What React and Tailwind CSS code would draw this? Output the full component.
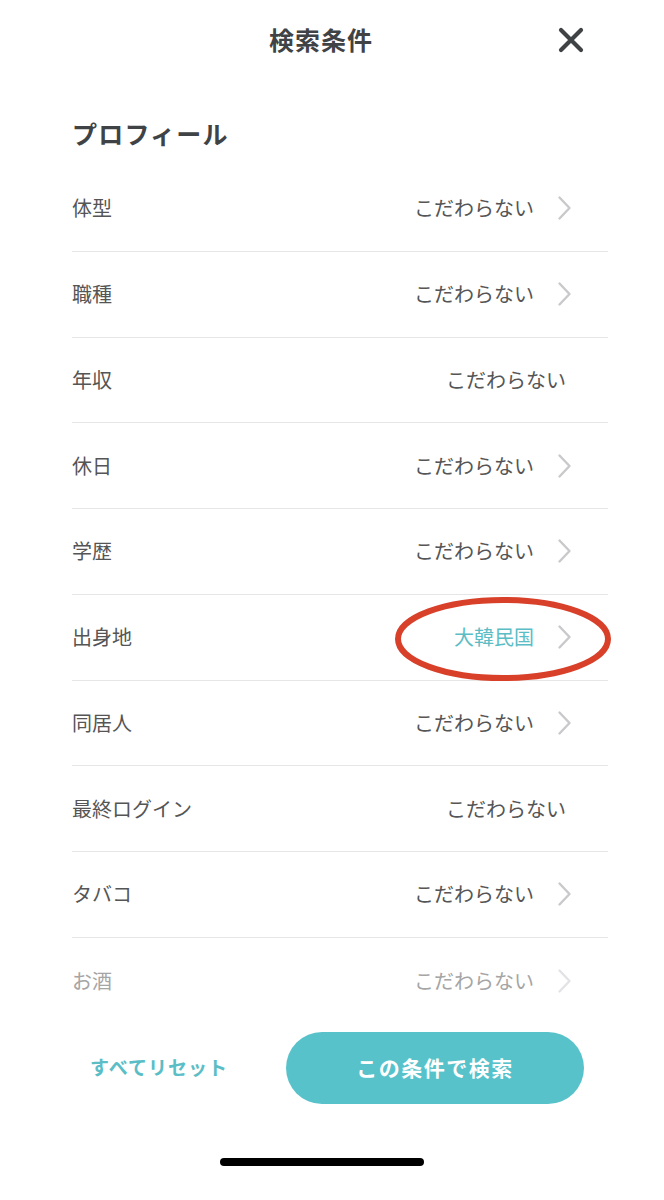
import React from "react";

const rows = [
  { label: "体型", value: "こだわらない", arrow: true },
  { label: "職種", value: "こだわらない", arrow: true },
  { label: "年収", value: "こだわらない", arrow: false },
  { label: "休日", value: "こだわらない", arrow: true },
  { label: "学歴", value: "こだわらない", arrow: true },
  { label: "出身地", value: "大韓民国", arrow: true, active: true },
  { label: "同居人", value: "こだわらない", arrow: true },
  { label: "最終ログイン", value: "こだわらない", arrow: false },
  { label: "タバコ", value: "こだわらない", arrow: true },
  { label: "お酒", value: "こだわらない", arrow: true, faded: true },
];

const Chevron = ({ faded }) => (
  <svg width="15" height="26" viewBox="0 0 15 26" className="ml-[23px]">
    <path
      d="M2.5 2.5 L12.5 13 L2.5 23.5"
      fill="none"
      stroke={faded ? "#e3e3e5" : "#c9c9cc"}
      strokeWidth="2.4"
      strokeLinecap="round"
      strokeLinejoin="round"
    />
  </svg>
);

const Row = ({ row }) => (
  <div
    className={`flex items-center justify-between h-[85.75px] pr-[36px] ${
      row.faded ? "" : "border-b border-[#e6e6e6]"
    }`}
  >
    <span className={`text-[20px] ${row.faded ? "text-[#a5a5a5]" : "text-[#555]"}`}>
      {row.label}
    </span>
    <div className="flex items-center">
      <span
        className={`text-[20px] ${
          row.active ? "text-[#5bbdc5]" : row.faded ? "text-[#a5a5a5]" : "text-[#555]"
        } ${row.arrow ? "" : "mr-[6px]"}`}
      >
        {row.value}
      </span>
      {row.arrow && <Chevron faded={row.faded} />}
    </div>
  </div>
);

export default function App() {
  return (
    <div
      className="relative w-[664px] h-[1200px] bg-white overflow-hidden"
      style={{ fontFamily: '"Noto Sans CJK JP", "Noto Sans", sans-serif' }}
    >
      <header className="relative flex items-center justify-center h-[80px] pr-[22px]">
        <h1 className="text-[25px] font-bold text-[#3f4345] tracking-[1px]">検索条件</h1>
        <button className="absolute right-[79px] top-[26px]">
          <svg width="28" height="28" viewBox="0 0 28 28">
            <path
              d="M4 4 L24 24 M24 4 L4 24"
              stroke="#3f4345"
              strokeWidth="4.2"
              strokeLinecap="round"
            />
          </svg>
        </button>
      </header>

      <main className="pl-[72px] pr-[56px]">
        <h2 className="text-[25px] font-bold text-[#3f4345] tracking-[1.2px] mt-[33px] h-[40px] leading-[40px] mb-[13px]">
          プロフィール
        </h2>
        <div>
          {rows.map((r) => (
            <Row key={r.label} row={r} />
          ))}
        </div>
      </main>

      <div className="flex items-center pl-[90px] mt-[8px]">
        <button className="text-[19px] font-bold text-[#5bbdc5] tracking-[1px] w-[196px] text-left">
          すべてリセット
        </button>
        <button className="h-[72px] w-[298px] rounded-full bg-[#58c2ca] text-white text-[21px] font-bold tracking-[1.5px]">
          この条件で検索
        </button>
      </div>

      <div className="flex mt-[54px] pl-[220px]">
        <div className="w-[204px] h-[8px] rounded-full bg-black" />
      </div>

      <svg
        className="absolute left-[394px] top-[595px]"
        width="218"
        height="88"
        viewBox="0 0 218 88"
      >
        <ellipse cx="109" cy="44" rx="105" ry="39" fill="none" stroke="#d8402a" strokeWidth="6" />
      </svg>
    </div>
  );
}
